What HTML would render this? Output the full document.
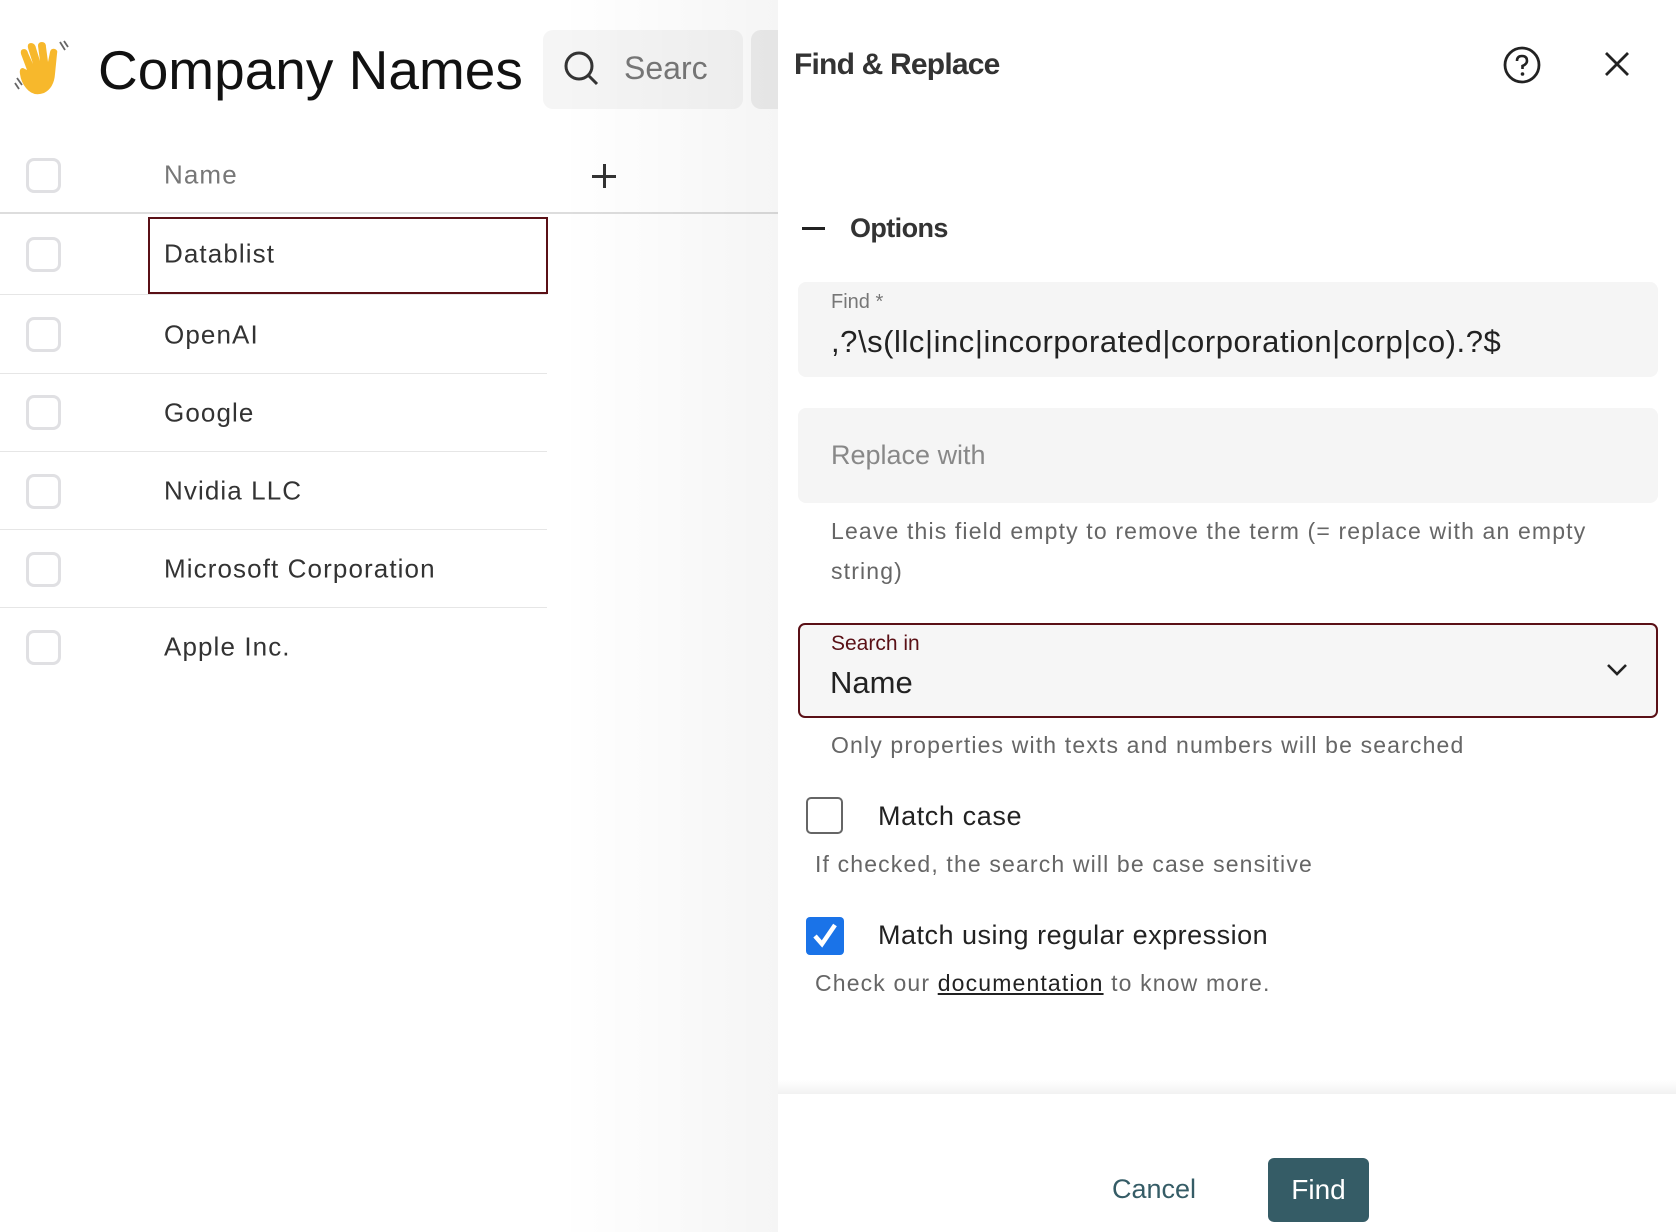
<!DOCTYPE html>
<html><head><meta charset="utf-8"><style>
*{box-sizing:border-box;margin:0;padding:0}
body{width:1676px;height:1232px;position:relative;overflow:hidden;background:#fff;font-family:"Liberation Sans",sans-serif;color:#222}
.a{position:absolute;white-space:nowrap}
.cb{position:absolute;width:35px;height:35px;border:3px solid #e0e0e3;border-radius:8px;left:26px}
.line{position:absolute;left:0;width:547px;height:1px;background:#e6e6e6}
.row{position:absolute;left:164px;font-size:26px;color:#333;transform:translateY(-50%);letter-spacing:1.1px}
.shade{position:absolute;left:560px;top:0;width:218px;height:1232px;background:linear-gradient(to right,rgba(0,0,0,0),rgba(0,0,0,0.04))}
.panel{position:absolute;left:778px;top:0;width:898px;height:1232px;background:#fff}
.field{position:absolute;left:20px;width:860px;background:#f5f5f5;border-radius:8px}
.help{font-size:23px;color:#666;letter-spacing:1.15px}
</style></head><body>
<svg class="a" style="left:13px;top:40px" width="60" height="58" viewBox="0 0 60 58">
<path d="M14 30 L8 14 Q7 9 11 9 Q14 9 15 13 L20 24 L15 8 Q14 3 18 3 Q22 3 23 8 L27 21 L25 6 Q25 2 29 2 Q33 2 33 7 L35 22 L37 12 Q38 8 42 9 Q45 10 44 14 L42 34 Q41 48 31 53 Q20 57 13 48 Q8 42 7 34 Q6 28 10 28 Z" fill="#f7b82c"/>
<path d="M4 38 L9 45 M2 43 L6 49 M47 2 L52 10 M51 1 L55 7" stroke="#666" stroke-width="1.8" fill="none"/>
</svg>
<div class="a" style="left:98px;top:38px;font-size:55px;color:#111">Company Names</div>
<div class="a" style="left:543px;top:30px;width:200px;height:79px;background:#f5f5f5;border-radius:10px"></div>
<svg class="a" style="left:563px;top:50px" width="38" height="38" viewBox="0 0 38 38"><circle cx="16" cy="16" r="13" stroke="#333" stroke-width="3" fill="none"/><path d="M26 26 L34 34" stroke="#333" stroke-width="3"/></svg>
<div class="a" style="left:624px;top:50px;font-size:32px;color:#777;width:84px;overflow:hidden">Search</div>
<div class="a" style="left:751px;top:30px;width:40px;height:79px;background:#eee;border-radius:10px"></div>

<div class="cb" style="top:158px"></div>
<div class="row" style="top:175px;color:#777">Name</div>
<div class="a" style="left:592px;top:175px;width:24px;height:2.5px;background:#333"></div>
<div class="a" style="left:603px;top:164px;width:2.5px;height:24px;background:#333"></div>
<div class="line" style="top:212px;height:2px;width:778px;background:#ddd"></div>
<div class="a" style="left:148px;top:217px;width:400px;height:77px;border:2px solid #5a1016"></div>

<div class="cb" style="top:237px"></div><div class="row" style="top:254px">Datablist</div>
<div class="line" style="top:294px"></div>
<div class="cb" style="top:317px"></div><div class="row" style="top:335px">OpenAI</div>
<div class="line" style="top:373px"></div>
<div class="cb" style="top:395px"></div><div class="row" style="top:413px">Google</div>
<div class="line" style="top:451px"></div>
<div class="cb" style="top:474px"></div><div class="row" style="top:491px">Nvidia LLC</div>
<div class="line" style="top:529px"></div>
<div class="cb" style="top:552px"></div><div class="row" style="top:569px">Microsoft Corporation</div>
<div class="line" style="top:607px"></div>
<div class="cb" style="top:630px"></div><div class="row" style="top:647px">Apple Inc.</div>
<div class="shade"></div>

<div class="panel">
<div class="a" style="left:16px;top:48px;font-size:30px;font-weight:bold;color:#333;letter-spacing:-0.8px">Find &amp; Replace</div>
<svg class="a" style="left:724px;top:45px" width="40" height="40" viewBox="0 0 40 40"><circle cx="20" cy="20" r="17" stroke="#222" stroke-width="2.8" fill="none"/><path d="M15 16 Q15 11 20 11 Q25 11 25 16 Q25 19 20.5 21 L20.5 24" stroke="#222" stroke-width="2.6" fill="none"/><circle cx="20.5" cy="29" r="1.8" fill="#222"/></svg>
<svg class="a" style="left:825px;top:50px" width="28" height="28" viewBox="0 0 28 28"><path d="M3 3 L25 25 M25 3 L3 25" stroke="#222" stroke-width="2.8"/></svg>
<div class="a" style="left:24px;top:227px;width:23px;height:3px;background:#222"></div>
<div class="a" style="left:72px;top:213px;font-size:27px;font-weight:bold;color:#333;letter-spacing:-0.6px">Options</div>

<div class="field" style="top:282px;height:95px"></div>
<div class="a" style="left:53px;top:291px;font-size:20px;color:#777">Find *</div>
<div class="a" style="left:53px;top:324px;font-size:31px;color:#222;letter-spacing:0.55px">,?\s(llc|inc|incorporated|corporation|corp|co).?$</div>
<div class="field" style="top:408px;height:95px"></div>
<div class="a" style="left:53px;top:440px;font-size:27px;color:#888">Replace with</div>
<div class="a help" style="left:53px;top:518px">Leave this field empty to remove the term (= replace with an empty</div>
<div class="a help" style="left:53px;top:558px">string)</div>

<div class="a" style="left:20px;top:623px;width:860px;height:95px;background:#f6f6f6;border:2px solid #5a1016;border-radius:7px"></div>
<div class="a" style="left:53px;top:632px;font-size:21px;color:#5a1016">Search in</div>
<div class="a" style="left:52px;top:665px;font-size:31px;color:#222">Name</div>
<svg class="a" style="left:827px;top:662px" width="24" height="16" viewBox="0 0 24 16"><path d="M3 3 L12 12 L21 3" stroke="#222" stroke-width="2.6" fill="none"/></svg>
<div class="a help" style="left:53px;top:732px">Only properties with texts and numbers will be searched</div>

<div class="a" style="left:28px;top:797px;width:37px;height:37px;border:2px solid #666;border-radius:5px"></div>
<div class="a" style="left:100px;top:801px;font-size:27px;color:#222;letter-spacing:0.6px">Match case</div>
<div class="a help" style="left:37px;top:851px">If checked, the search will be case sensitive</div>
<div class="a" style="left:28px;top:917px;width:38px;height:38px;background:#1a73e8;border-radius:4px"></div>
<svg class="a" style="left:28px;top:917px" width="38" height="38" viewBox="0 0 38 38"><path d="M9 19 L16 27 L29 8" stroke="#fff" stroke-width="4.5" fill="none"/></svg>
<div class="a" style="left:100px;top:920px;font-size:27px;color:#222;letter-spacing:0.5px">Match using regular expression</div>
<div class="a help" style="left:37px;top:970px">Check our <span style="color:#222;text-decoration:underline">documentation</span> to know more.</div>

<div class="a" style="left:0;top:1080px;width:898px;height:14px;background:linear-gradient(#fff,#f2f2f2)"></div>
<div class="a" style="left:334px;top:1174px;font-size:27px;color:#355c66">Cancel</div>
<div class="a" style="left:490px;top:1158px;width:101px;height:64px;background:#355c66;border-radius:6px;color:#fff;font-size:28px;text-align:center;line-height:64px">Find</div>
</div>
</body></html>
